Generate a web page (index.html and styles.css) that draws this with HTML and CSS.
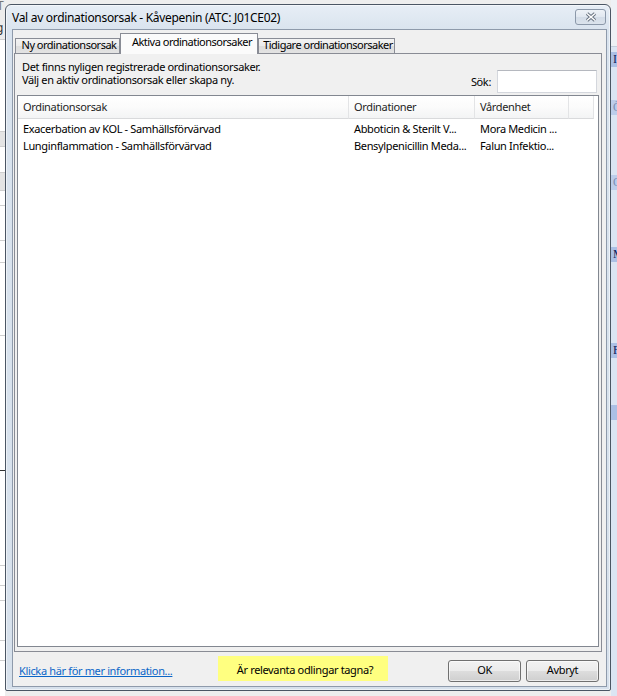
FILE: index.html
```html
<!DOCTYPE html>
<html lang="sv">
<head>
<meta charset="utf-8">
<title>Val av ordinationsorsak</title>
<link rel="stylesheet" href="styles.css">
</head>
<body>
<div class="screen">
  <div class="bg-left">
    <div class="bl bl-top"><span class="bl-glyph">T</span><span class="bl-glyph2">g</span></div>
    <div class="bl bl-h92"></div>
    <div class="bl bl-h15 bl-gray"></div>
    <div class="bl bl-h26"></div>
    <div class="bl bl-h18 bl-gray"></div>
    <div class="bl bl-h15"></div>
    <div class="bl bl-h35"></div>
    <div class="bl bl-h22"></div>
    <div class="bl bl-h73"></div>
    <div class="bl bl-h135 bl-dark"></div>
    <div class="bl bl-h95"></div>
    <div class="bl bl-h20"></div>
    <div class="bl bl-h15"></div>
    <div class="bl bl-h40"></div>
    <div class="bl bl-h20"></div>
  </div>

  <div class="window">
    <div class="titlebar">
      <div class="title">Val av ordinationsorsak - Kåvepenin (ATC: J01CE02)</div>
      <div class="close-btn">
        <svg width="12" height="10" viewBox="0 0 12 10" aria-hidden="true">
          <path d="M2 1.5 L10 8.5 M10 1.5 L2 8.5" stroke="#66717f" stroke-width="3.4" fill="none"/>
          <path d="M2 1.5 L10 8.5 M10 1.5 L2 8.5" stroke="#ffffff" stroke-width="1.5" fill="none"/>
        </svg>
      </div>
    </div>

    <div class="client">
      <div class="tabs">
        <div class="tab tab-1">Ny ordinationsorsak</div>
        <div class="tab tab-active">Aktiva ordinationsorsaker</div>
        <div class="tab tab-3">Tidigare ordinationsorsaker</div>
      </div>

      <div class="panel">
        <div class="panel-head">
          <div class="intro">
            <div>Det finns nyligen registrerade ordinationsorsaker.</div>
            <div>Välj en aktiv ordinationsorsak eller skapa ny.</div>
          </div>
          <div class="search">
            <span class="search-label">Sök:</span>
            <div class="search-input"></div>
          </div>
        </div>

        <div class="list">
          <div class="list-header">
            <div class="cell hcell c1">Ordinationsorsak</div>
            <div class="cell hcell c2">Ordinationer</div>
            <div class="cell hcell c3">Vårdenhet</div>
            <div class="cell hcell c4"></div>
          </div>
          <div class="list-body">
            <div class="row">
              <div class="cell c1">Exacerbation av KOL - Samhällsförvärvad</div>
              <div class="cell c2">Abboticin &amp; Sterilt V...</div>
              <div class="cell c3">Mora Medicin ...</div>
            </div>
            <div class="row">
              <div class="cell c1">Lunginflammation - Samhällsförvärvad</div>
              <div class="cell c2">Bensylpenicillin Meda...</div>
              <div class="cell c3">Falun Infektio...</div>
            </div>
          </div>
        </div>
      </div>

      <div class="footer">
        <div class="link-wrap"><a class="link" href="#">Klicka här för mer information...</a></div>
        <div class="notice">Är relevanta odlingar tagna?</div>
        <div class="buttons">
          <div class="btn">OK</div>
          <div class="btn">Avbryt</div>
        </div>
      </div>
    </div>
  </div>

  <div class="bg-right">
    <div class="br-top"></div>
    <div class="br-blk br-m5">I</div>
    <div class="br-blk br-light br-m33">Ö</div>
    <div class="br-blk br-light br-m60">O</div>
    <div class="br-blk br-m57">M</div>
    <div class="br-blk br-m81">F</div>
    <div class="br-blk br-m47"></div>
  </div>
</div>
</body>
</html>
```

FILE: styles.css
```css
* { box-sizing: border-box; }

html, body {
  margin: 0;
  padding: 0;
}

body {
  width: 617px;
  height: 696px;
  overflow: hidden;
  background: #eeeeee;
  font-family: "Noto Sans", "Open Sans", sans-serif;
  font-size: 11px;
  letter-spacing: -0.35px;
  color: #000;
}

.screen {
  display: flex;
  height: 696px;
}

/* ---------- background application (left) ---------- */
.bg-left {
  width: 5px;
  flex: none;
  display: flex;
  flex-direction: column;
  background: #fff;
  overflow: hidden;
}
.bl { border-bottom: 1px solid #cfcfcf; flex: none; }
.bl-top {
  height: 40px;
  background: #ececec;
  color: #777;
  font-size: 12px;
  line-height: 12px;
}
.bl-glyph { display: block; margin-left: -3px; }
.bl-glyph2 { display: block; margin-top: 10px; margin-left: -4px; color: #333; }
.bl-h92 { height: 92px; }
.bl-h15 { height: 15px; }
.bl-h26 { height: 26px; }
.bl-h18 { height: 18px; }
.bl-h35 { height: 35px; }
.bl-h22 { height: 22px; }
.bl-h73 { height: 73px; }
.bl-h135 { height: 135px; }
.bl-h95 { height: 95px; }
.bl-h20 { height: 20px; }
.bl-h40 { height: 40px; }
.bl-gray { background: #e4e4e4; }
.bl-dark { border-bottom-color: #333; }

/* ---------- background application (right) ---------- */
.bg-right {
  width: 6px;
  flex: none;
  background: #dbe5f3;
  display: flex;
  flex-direction: column;
  overflow: hidden;
}
.br-top {
  height: 47px;
  background: #eef1f5;
  border-bottom: 1px solid #c4cfdd;
}
.br-blk {
  height: 15px;
  background: #abc0e5;
  color: #10205a;
  font-family: "Liberation Serif", serif;
  font-size: 12px;
  line-height: 15px;
  padding-left: 2px;
}
.br-light { background: #bccdeb; color: #7d8fb4; }
.br-m5 { margin-top: 5px; }
.br-m33 { margin-top: 33px; }
.br-m60 { margin-top: 60px; }
.br-m57 { margin-top: 57px; }
.br-m81 { margin-top: 81px; }
.br-m47 { margin-top: 47px; }

/* ---------- dialog window ---------- */
.window {
  flex: none;
  width: 606px;
  height: 687px;
  margin-top: 4px;
  border: 1px solid #4b5664;
  border-radius: 6px 6px 2px 2px;
  background: linear-gradient(to bottom, #e7eef6 0px, #d9e3ee 26px, #d7e1ec 100%);
  box-shadow: inset 0 0 0 1px rgba(255, 255, 255, 0.55);
  display: flex;
  flex-direction: column;
  padding: 0 3px 3px 6px;
}

.titlebar {
  height: 24px;
  flex: none;
  display: flex;
  align-items: center;
  justify-content: space-between;
}

.title {
  font-size: 12px;
  letter-spacing: -0.3px;
  color: #000;
  white-space: nowrap;
}

.close-btn {
  align-self: flex-start;
  margin-top: 4px;
  margin-right: 1px;
  width: 31px;
  height: 16px;
  border: 1px solid #8b98a9;
  border-radius: 3px;
  background: linear-gradient(to bottom, #eef2f7 0%, #e1e8f0 50%, #d3dce7 51%, #dbe3ec 100%);
  display: flex;
  align-items: center;
  justify-content: center;
}

.client {
  flex: 1;
  border: 1px solid #8e9aab;
  background: #f0f0f0;
  display: flex;
  flex-direction: column;
}

/* ---------- tabs ---------- */
.tabs {
  flex: none;
  height: 20px;
  margin-top: 3px;
  padding-left: 2px;
  display: flex;
  align-items: flex-end;
}

.tab {
  height: 15px;
  border: 1px solid #898c95;
  border-bottom: none;
  background: linear-gradient(to bottom, #f3f3f3 0%, #ebebeb 50%, #dddddd 51%, #e3e3e3 100%);
  line-height: 12px;
  padding: 0 0 2px 3px;
  letter-spacing: -0.5px;
  text-align: center;
  white-space: nowrap;
}
.tab-1 { width: 105px; }
.tab-3 { width: 137px; }
.tab-active {
  width: 138px;
  height: 21px;
  margin-bottom: -1px;
  padding: 2px 0 6px 6px;
  background: #fbfbfb;
  position: relative;
  z-index: 1;
}

/* ---------- tab panel ---------- */
.panel {
  flex: 1;
  margin: 0 4px 0 1px;
  border: 1px solid #898c95;
  background: #f0f0f0;
  padding: 0 2px 4px 2px;
  display: flex;
  flex-direction: column;
}

.panel-head {
  flex: none;
  height: 41px;
  display: flex;
  justify-content: space-between;
  align-items: flex-start;
}

.intro {
  padding: 6px 0 0 5px;
  line-height: 13px;
}

.search {
  margin-top: 16px;
  margin-right: 2px;
  display: flex;
  align-items: center;
  gap: 6px;
}

.search-input {
  width: 100px;
  height: 23px;
  background: #fff;
  border: 1px solid #d4d7dd;
  border-top-color: #b5b8bf;
}

/* ---------- list view ---------- */
.list {
  flex: 1;
  border: 1px solid #828790;
  background: #fff;
  display: flex;
  flex-direction: column;
}

.list-header {
  display: flex;
  flex: none;
}

.cell {
  flex: none;
  padding-left: 5px;
  border-right: 1px solid transparent;
  white-space: nowrap;
  overflow: hidden;
}

.hcell {
  height: 23px;
  line-height: 22px;
  color: #1e1e1e;
  background: linear-gradient(to bottom, #ffffff 0%, #fbfbfb 50%, #f3f4f5 100%);
  border-right-color: #e3e4e6;
  border-bottom: 1px solid #d9dadc;
}

.c1 { width: 331px; }
.c2 { width: 126px; }
.c3 { width: 94px; }
.c4 { width: 25px; }

.list-body {
  padding-top: 1px;
}

.row {
  display: flex;
  height: 17px;
  line-height: 17px;
}

/* ---------- footer ---------- */
.footer {
  flex: none;
  height: 34px;
  padding: 4px 7px 0 0;
  display: flex;
  align-items: flex-start;
}

.link-wrap {
  width: 205px;
  flex: none;
  padding: 8px 0 0 6px;
  line-height: 13px;
}

.link {
  color: #0a66c8;
  text-decoration: underline;
  white-space: nowrap;
}

.notice {
  width: 170px;
  height: 25px;
  flex: none;
  background: #ffff80;
  text-align: center;
  line-height: 23px;
  padding-top: 2px;
  padding-left: 4px;
  white-space: nowrap;
}

.buttons {
  margin-left: auto;
  margin-top: 4px;
  display: flex;
  gap: 5px;
}

.btn {
  width: 73px;
  height: 22px;
  border: 1px solid #707070;
  border-radius: 3px;
  background: linear-gradient(to bottom, #f2f2f2 0%, #ebebeb 50%, #dddddd 51%, #cfcfcf 100%);
  box-shadow: inset 0 0 0 1px rgba(255, 255, 255, 0.6);
  text-align: center;
  line-height: 18px;
}
```
